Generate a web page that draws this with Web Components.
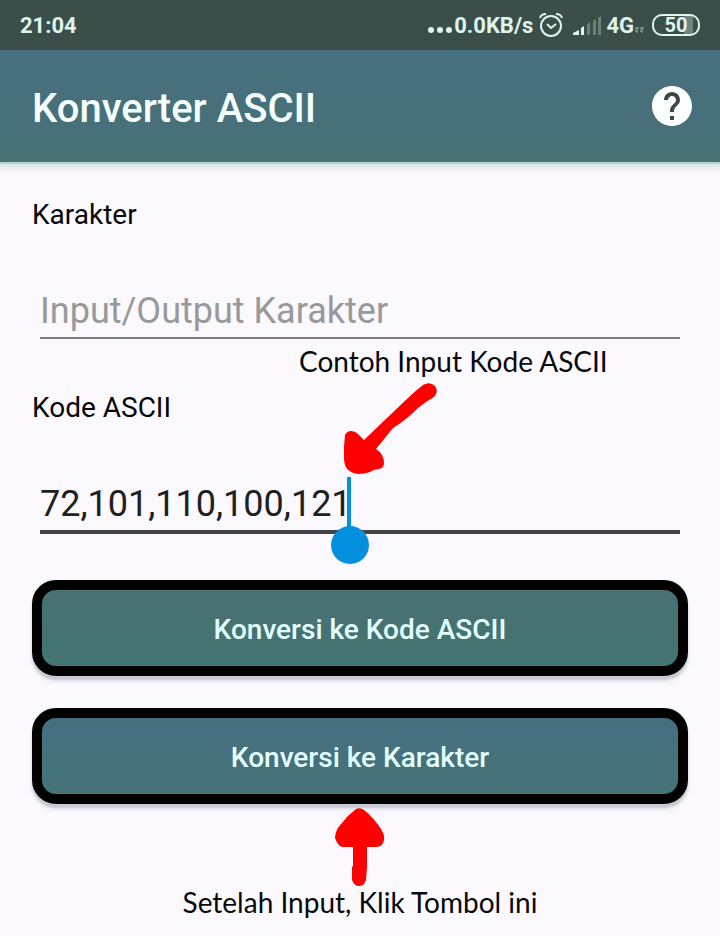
<!DOCTYPE html>
<html lang="id">
<head>
<meta charset="utf-8">
<meta name="viewport" content="width=device-width, initial-scale=1">
<title>Konverter ASCII</title>
<style>
  html { background: #fbf9fd; }
  body { margin: 0; font-family: Roboto, "Liberation Sans", sans-serif; color: #060606; }
</style>
</head>
<body>
<ascii-app></ascii-app>
<script>
class BaseElement extends HTMLElement {
  constructor() {
    super();
    this.attachShadow({ mode: 'open' });
  }
  connectedCallback() {
    this.shadowRoot.innerHTML = this.render();
  }
}

/* Phone status bar: clock, network speed, alarm, signal and battery */
customElements.define('status-bar', class extends BaseElement {
  render() {
    return `<style>
      :host { display: flex; justify-content: space-between; align-items: center; height: 50px;
        padding: 2px 20px 0; box-sizing: border-box; background: #3b4e4a; color: #def5ed;
        font-size: 22px; line-height: 28px; font-weight: 700; }
      .right { display: flex; align-items: center; }
      .speed { display: flex; align-items: center; gap: 2px; }
      svg { display: block; }
      .dots { margin-top: 8px; }
      .alarm { margin: 0 0 2px 5px; }
      .signal { margin-left: 9px; }
      .net { margin-left: 4px; }
      .data { margin: 8px 8px 0 1px; }
      .battery { width: 48px; height: 22px; box-sizing: border-box; border: 2px solid #def5ed;
        margin-bottom: 2px; border-radius: 10px; text-align: center; font-size: 20px; line-height: 19px;
        background: linear-gradient(90deg, transparent 68%, #71857f 68%, #71857f 88%, transparent 88%); }
    </style>
    <time>21:04</time>
    <div class="right">
      <div class="speed">
        <svg class="dots" width="24" height="8" fill="#def5ed"><circle cx="3" cy="4" r="3"/><circle cx="12" cy="4" r="3"/><circle cx="21" cy="4" r="3"/></svg>
        <span>0.0KB/s</span>
      </div>
      <svg class="alarm" width="26" height="26" fill="none" stroke="#def5ed" stroke-width="2">
        <circle cx="13" cy="14" r="10"/><path d="M9 12l4 4 5-4M2 6q1-4 6-4M24 6q-1-4-6-4"/></svg>
      <svg class="signal" width="29" height="20">
        <g fill="#def5ed"><path d="M0 19v-2l6-3v5z"/><path d="M8 19v-7l3-2v9z"/></g>
        <g fill="#6b7e78"><path d="M14 19V8l3-2v13z"/><path d="M20 19V5l3-2v16z"/><path d="M25 19V2l3-2v19z"/></g></svg>
      <span class="net">4G</span>
      <svg class="data" width="9" height="8" fill="none" stroke="#9eb2aa"><path d="M0 2h4M2 2v5M0 5h2M5 2h4M7 2v5M5 5h2"/></svg>
      <span class="battery">50</span>
    </div>`;
  }
});

customElements.define('app-bar', class extends BaseElement {
  render() {
    return `<style>
      :host { display: flex; justify-content: space-between; align-items: center; height: 112px;
        padding: 0 24px 0 32px; box-sizing: border-box; position: relative;
        background: linear-gradient(#47707f, #48707a 65%, #487373);
        box-shadow: 0 2px 0 #b9d1cc, 0 5px 0 #dce8e5, 0 9px 2px #f1eef2; }
      h1 { margin: 0; padding-top: 6px; color: #f4ffff; font-size: 40px; line-height: 48px; font-weight: 500; }
      button { all: unset; cursor: pointer; display: block; }
      svg { display: block; }
    </style>
    <h1><slot></slot></h1>
    <button type="button" aria-label="Bantuan">
      <svg width="48" height="48" viewBox="0 0 24 24"><circle cx="12" cy="12" r="9" fill="#3d4746"/>
        <path fill="#fbfeff" d="M12 2C6.480 2 2 6.480 2 12s4.480 10 10 10 10-4.480 10-10S17.520 2 12 2zm1 17h-2v-2h2v2zm2.070-7.750l-.9.920C13.450 12.900 13 13.500 13 15h-2v-.5c0-1.100.450-2.100 1.170-2.830l1.240-1.260c.370-.360.590-.860.590-1.410 0-1.100-.9-2-2-2s-2 .9-2 2H8c0-2.210 1.790-4 4-4s4 1.790 4 4c0 .880-.360 1.680-.930 2.250z"/></svg>
    </button>`;
  }
});

/* Labelled text box with an underline; slotted children float over it */
customElements.define('text-field', class extends BaseElement {
  render() {
    const focused = this.hasAttribute('focused');
    return `<style>
      :host { display: block; position: relative; }
      label { display: block; font-size: 28px; line-height: 34px; }
      input { display: block; width: calc(100% - 16px); height: ${focused ? 71 : 69}px; margin: 38px 8px 0;
        padding: 15px 0 0; box-sizing: border-box; border: 0; border-radius: 0; outline: 0;
        border-bottom: ${focused ? '4px solid #434244' : '2px solid #7c7b7e'};
        background: none; color: #202023; font: 400 36px/44px Roboto, sans-serif; }
      input::placeholder { color: #99989b; opacity: 1; }
    </style>
    <label for="box">${this.getAttribute('label')}</label>
    <input id="box" type="text" placeholder="${this.getAttribute('placeholder') || ''}" value="${this.getAttribute('value') || ''}">
    <slot></slot>`;
  }
});

customElements.define('caret-handle', class extends BaseElement {
  render() {
    return `<style>
      :host { position: absolute; left: 299px; bottom: -30px; }
      svg { display: block; }
    </style>
    <svg width="38" height="87" fill="#058fdf"><path d="M16 0h4v52h-4z"/><circle cx="19" cy="68" r="19"/></svg>`;
  }
});

customElements.define('action-button', class extends BaseElement {
  render() {
    return `<style>
      :host { display: block; }
      button { display: block; width: 100%; height: 96px; box-sizing: border-box; border: 10px solid #000;
        border-radius: 24px; padding: 4px 0 0; cursor: pointer; color: #e2ffff;
        background: linear-gradient(var(--top), var(--bottom));
        box-shadow: 0 4px 2px #cac9d2, 0 6px 4px #e8e7f0; font: 500 28px/32px Roboto, sans-serif; }
    </style>
    <button type="button"><slot></slot></button>`;
  }
});

/* Handwritten hint: a caption and a brush-drawn red arrow */
customElements.define('hint-note', class extends BaseElement {
  render() {
    const up = this.getAttribute('arrow') === 'up';
    const arrow = up
      ? `<svg width="50" height="78" fill="#fe0000"><path d="M21 1q4-2 8 1 10 8 17 19 4 6 3 11-1 6-7 7H32v20l-1 13q-2 6-7 6t-7-6V59l1-1V39H7q-4-1-7-9 0-8 7-15 6-8 14-14z"/></svg>`
      : `<svg width="94" height="92" fill="#fe0000"><path d="M79 2q7-4 12 1 4 6-1 11-9 5-16 11-12 12-25 20L32 66q8 5 8 14 0 5-5 6-5 0-9 3-6 2-12 2-10-1-13-9-2-8-1-18l1-12q2-4 6-4 4 0 7 3l6 6 24-23 20-19q7-7 15-13z"/></svg>`;
    return `<style>
      :host { display: flex; flex-direction: column; align-items: center; color: #08080a;
        font: 400 28px/36px Lato, "Noto Sans", sans-serif; white-space: nowrap; }
      :host([arrow="up"]) { margin-top: 4px; }
      :host([arrow="down"]) { position: absolute; left: 267px; top: -48px; align-items: flex-start; pointer-events: none; }
      svg { display: block; margin: 4px 0 0 45px; }
      :host([arrow="up"]) svg { margin: 0 0 -2px; }
    </style>
    ${up ? arrow + '<span><slot></slot></span>' : '<span><slot></slot></span>' + arrow}`;
  }
});

customElements.define('ascii-app', class extends BaseElement {
  render() {
    return `<style>
      :host { display: block; }
      main { padding: 36px 32px 16px; }
      form { display: grid; grid-template-columns: 100%; }
      .second { margin-top: 52px; }
      .actions { display: grid; gap: 32px; margin-top: 46px; }
      .code { --top: #4a7072; --bottom: #427572; }
      .char { --top: #456f80; --bottom: #467378; }
    </style>
    <status-bar></status-bar>
    <app-bar>Konverter ASCII</app-bar>
    <main>
      <form>
        <text-field label="Karakter" placeholder="Input/Output Karakter"></text-field>
        <text-field class="second" label="Kode ASCII" value="72,101,110,100,121" focused>
          <caret-handle></caret-handle>
          <hint-note arrow="down">Contoh Input Kode ASCII</hint-note>
        </text-field>
        <div class="actions">
          <action-button class="code">Konversi ke Kode ASCII</action-button>
          <action-button class="char">Konversi ke Karakter</action-button>
        </div>
      </form>
      <hint-note arrow="up">Setelah Input, Klik Tombol ini</hint-note>
    </main>`;
  }
});
</script>
</body>
</html>
